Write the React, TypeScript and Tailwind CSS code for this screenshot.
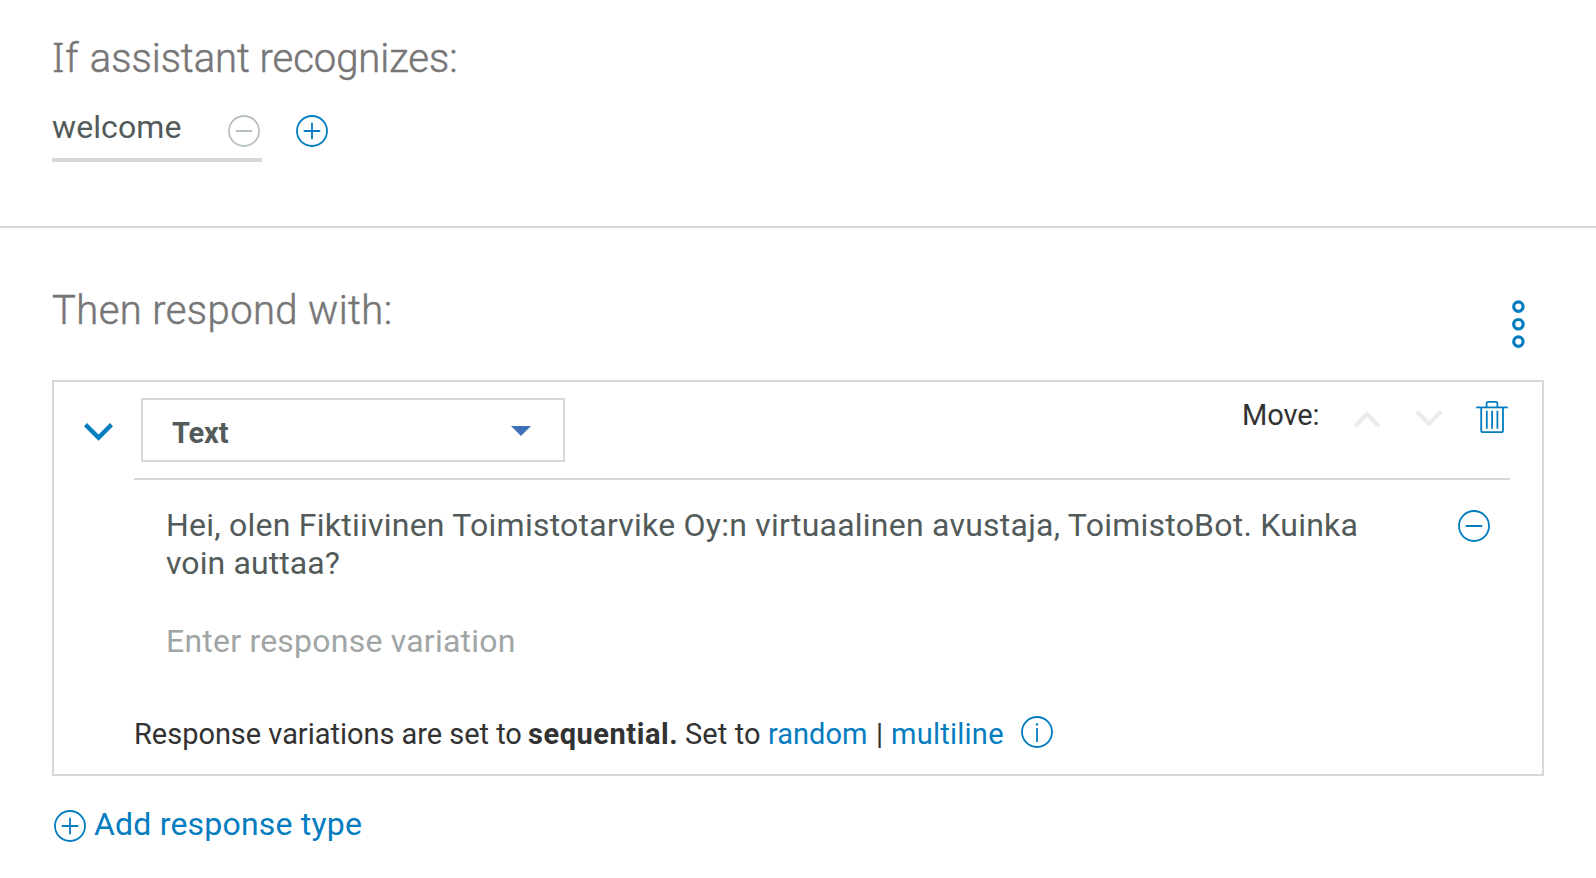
import type { ReactNode } from "react";

type IconProps = { className?: string; children?: ReactNode };

function CircleIcon({ className = "", children }: IconProps) {
  return (
    <svg className={`h-8 w-8 shrink-0 ${className}`} viewBox="0 0 32 32" fill="none" stroke="currentColor" strokeWidth="1.8">
      <circle cx="16" cy="16" r="15" />
      {children}
    </svg>
  );
}

function MinusCircle({ className }: IconProps) {
  return (
    <CircleIcon className={className}>
      <path d="M8.4 16H23.6" strokeLinecap="round" />
    </CircleIcon>
  );
}

function PlusCircle({ className }: IconProps) {
  return (
    <CircleIcon className={className}>
      <path d="M8.4 16H23.6M16 8.4V23.6" strokeLinecap="round" />
    </CircleIcon>
  );
}

function InfoCircle({ className }: IconProps) {
  return (
    <CircleIcon className={className}>
      <path d="M16 12V26" />
      <circle cx="16" cy="8.4" r="1.2" fill="currentColor" stroke="none" />
    </CircleIcon>
  );
}

function Chevron({ className = "" }: IconProps) {
  return (
    <svg className={`shrink-0 ${className}`} viewBox="0 0 29 18" fill="currentColor">
      <path d="M0 3.2L3 0L14.5 11.4L26 0L29 3.2L14.5 17.8Z" />
    </svg>
  );
}

function Trash({ className = "" }: IconProps) {
  return (
    <svg className={`h-8 w-8 shrink-0 ${className}`} viewBox="0 0 32 32" fill="none" stroke="currentColor" strokeWidth="1.8">
      <path d="M0.2 6.4H31.8" />
      <path d="M10.6 6.4V2.4Q10.6 0.9 12.1 0.9H19.9Q21.4 0.9 21.4 2.4V6.4" />
      <path d="M5.2 6.4V29.4Q5.2 31.1 6.9 31.1H25.3Q27 31.1 27 29.4V6.4" />
      <path d="M10.8 9.8V27.8M16.1 9.8V27.8M21.4 9.8V27.8" />
    </svg>
  );
}

function OverflowMenu({ className = "" }: IconProps) {
  return (
    <svg className={`h-12 w-[13px] shrink-0 ${className}`} viewBox="0 0 13 48" fill="none" stroke="currentColor" strokeWidth="3.2">
      <circle cx="6.4" cy="6.6" r="4.7" />
      <circle cx="6.4" cy="24.2" r="4.7" />
      <circle cx="6.4" cy="41.6" r="4.7" />
    </svg>
  );
}

export default function App() {
  return (
    <main className="h-[878px] w-[1596px] overflow-hidden bg-white font-['Roboto',sans-serif] text-[#323232]">
      <section className="h-[228px] border-b-2 border-[#d8d8d8] pt-[37px] pl-[52px]">
        <h2 className="h-10 text-[40px] leading-10 font-light tracking-[-0.05px] text-[#777677] [-webkit-text-stroke:0.5px_#777677]">
          <span className="tracking-[0.8px]">
            <span className="font-['Noto_Sans'] leading-none">I</span>f{" "}
          </span>
          assistant recognizes:
        </h2>
        <div className="mt-[30px] flex">
          <div className="flex h-[55px] w-[210px] justify-between border-b-4 border-[#d8d8d8] pr-0.5">
            <span className="text-[32px] leading-10 tracking-[0.1px] text-[#525a5a]">welcome</span>
            <MinusCircle className="mt-2 text-[#b8c1c1]" />
          </div>
          <PlusCircle className="mt-2 ml-[34px] text-[#047cc0]" />
        </div>
      </section>

      <section className="px-[52px] pt-[62px]">
        <div className="flex h-[90px] justify-between">
          <h2 className="pt-px text-[40px] leading-10 font-light tracking-[0.4px] text-[#777677] [-webkit-text-stroke:0.5px_#777677]">
            Then respond with:
          </h2>
          <OverflowMenu className="mt-2.5 mr-[19px] text-[#047cc0]" />
        </div>

        <div className="h-[396px] border-2 border-[#d8d8d8] pr-8 pl-20">
          <div className="-ml-[50px] flex">
            <Chevron className="mt-[41px] h-[18px] w-[29px] text-[#047cc0]" />
            <div className="ml-[21px] flex h-[98px] flex-1 items-start border-b-2 border-[#d8d8d8] pl-[7px]">
              <div className="mt-4 flex h-16 w-[424px] items-center justify-between border-2 border-[#d8d8d8] pr-8 pl-[29px]">
                <span className="pt-1.5 text-[29px] leading-8 font-bold tracking-[-0.1px] text-[#525a5a]">Text</span>
                <svg className="mt-0.5 h-2.5 w-5" viewBox="0 0 20 10" fill="#4071b8">
                  <path d="M0 0H20L10 10Z" />
                </svg>
              </div>
              <div className="mt-[17px] ml-auto flex items-start">
                <span className="w-[111px] text-[29px] leading-8 tracking-[-0.1px]">Move:</span>
                <Chevron className="mt-3 h-[17px] w-[28px] rotate-180 text-[#ececec]" />
                <Chevron className="mt-[11px] ml-[34px] h-[17px] w-[28px] text-[#ececec]" />
                <Trash className="mt-0.5 mr-0.5 ml-[33px] text-[#047cc0]" />
              </div>
            </div>
          </div>

          <div className="flex items-start justify-between pt-[26px] pr-5 pl-8">
            <p className="text-[32px] leading-[38px] tracking-[0.24px] text-[#525a5a]">
              Hei, olen Fiktiivinen Toimistotarvike Oy:n virtuaalinen avustaja, ToimistoBot. Kuinka
              <br />
              <span className="tracking-[0.1px]">voin auttaa?</span>
            </p>
            <MinusCircle className="mt-1 text-[#047cc0]" />
          </div>
          <p className="mt-10 pl-8 text-[32px] leading-[38px] tracking-[0.22px] text-[#a0a5a5]">Enter response variation</p>

          <div className="mt-[55px] flex text-[29px] leading-[38px] whitespace-pre">
            <span className="w-[394px] tracking-[-0.03px]">Response variations are set to</span>
            <b className="w-[157px] tracking-[0.55px]">sequential.</b>
            <span className="w-[83px] tracking-[0.1px]">Set to</span>
            <a className="w-[108px] text-[#047cc0]">random</a>
            <span className="w-[15px]">|</span>
            <a className="w-[112px] tracking-[0.25px] text-[#047cc0]">multiline</a>
            <InfoCircle className="mt-px ml-[18px] text-[#047cc0]" />
          </div>
        </div>

        <button className="mt-[29px] ml-0.5 flex gap-2 text-[32px] leading-[38px] tracking-[0.2px] text-[#047cc0]">
          <PlusCircle className="mt-[5px]" />
          Add response type
        </button>
      </section>
    </main>
  );
}
